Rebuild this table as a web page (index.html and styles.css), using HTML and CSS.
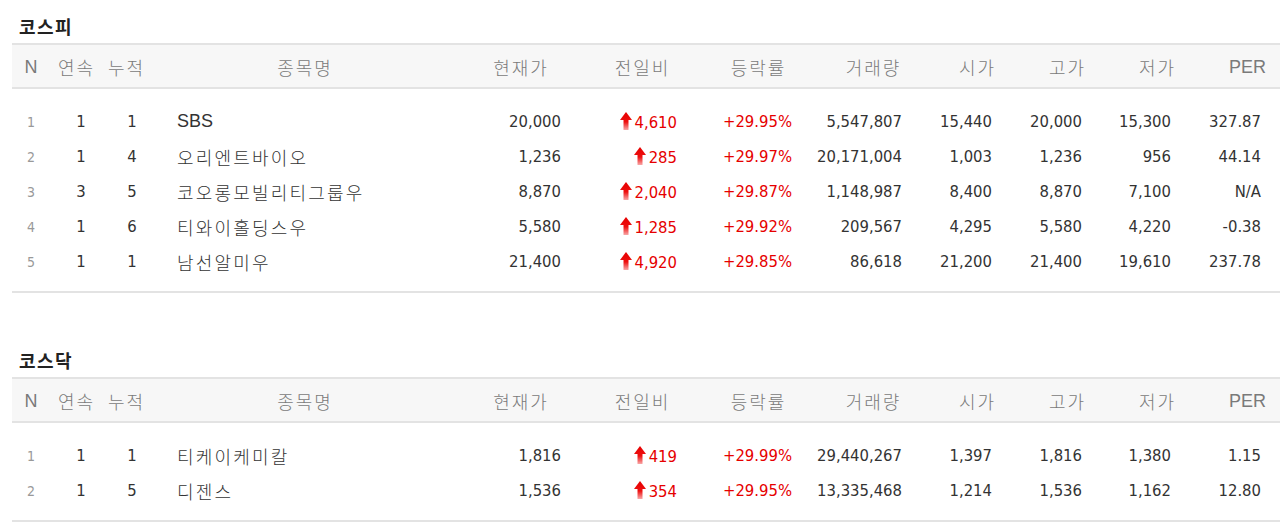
FILE: index.html
```html
<!DOCTYPE html>
<html lang="ko">
<head>
<meta charset="utf-8">
<title>코스피 · 코스닥 상한가</title>
<link rel="stylesheet" href="styles.css">
</head>
<body>
<svg class="defs" width="0" height="0" aria-hidden="true">
  <defs>
    <linearGradient id="upgrad" x1="0" y1="0" x2="0" y2="1">
      <stop offset="0" stop-color="#e60000"/>
      <stop offset="0.55" stop-color="#ee1010"/>
      <stop offset="1" stop-color="#f8a8a8"/>
    </linearGradient>
    <symbol id="up" viewBox="0 0 12 18">
      <path d="M6 0 L12 8 L8.5 8 L8.5 18 L3.5 18 L3.5 8 L0 8 Z" fill="url(#upgrad)"/>
    </symbol>
  </defs>
</svg>

<section class="market">
  <h2 class="market-title">코스피</h2>
  <div class="table">
    <div class="row head">
      <span class="lat">N</span><span>연속</span><span>누적</span><span>종목명</span><span>현재가</span><span>전일비</span><span>등락률</span><span>거래량</span><span>시가</span><span>고가</span><span>저가</span><span class="lat">PER</span>
    </div>
    <div class="body">
      <div class="row">
        <span class="n">1</span><span class="c">1</span><span class="c">1</span><span class="name lat">SBS</span><span class="num">20,000</span><span class="num up"><svg class="arrow"><use href="#up"/></svg>4,610</span><span class="num up">+29.95%</span><span class="num">5,547,807</span><span class="num">15,440</span><span class="num">20,000</span><span class="num">15,300</span><span class="num">327.87</span>
      </div>
      <div class="row">
        <span class="n">2</span><span class="c">1</span><span class="c">4</span><span class="name">오리엔트바이오</span><span class="num">1,236</span><span class="num up"><svg class="arrow"><use href="#up"/></svg>285</span><span class="num up">+29.97%</span><span class="num">20,171,004</span><span class="num">1,003</span><span class="num">1,236</span><span class="num">956</span><span class="num">44.14</span>
      </div>
      <div class="row">
        <span class="n">3</span><span class="c">3</span><span class="c">5</span><span class="name">코오롱모빌리티그룹우</span><span class="num">8,870</span><span class="num up"><svg class="arrow"><use href="#up"/></svg>2,040</span><span class="num up">+29.87%</span><span class="num">1,148,987</span><span class="num">8,400</span><span class="num">8,870</span><span class="num">7,100</span><span class="num">N/A</span>
      </div>
      <div class="row">
        <span class="n">4</span><span class="c">1</span><span class="c">6</span><span class="name">티와이홀딩스우</span><span class="num">5,580</span><span class="num up"><svg class="arrow"><use href="#up"/></svg>1,285</span><span class="num up">+29.92%</span><span class="num">209,567</span><span class="num">4,295</span><span class="num">5,580</span><span class="num">4,220</span><span class="num">-0.38</span>
      </div>
      <div class="row">
        <span class="n">5</span><span class="c">1</span><span class="c">1</span><span class="name">남선알미우</span><span class="num">21,400</span><span class="num up"><svg class="arrow"><use href="#up"/></svg>4,920</span><span class="num up">+29.85%</span><span class="num">86,618</span><span class="num">21,200</span><span class="num">21,400</span><span class="num">19,610</span><span class="num">237.78</span>
      </div>
    </div>
  </div>
</section>

<section class="market">
  <h2 class="market-title">코스닥</h2>
  <div class="table">
    <div class="row head">
      <span class="lat">N</span><span>연속</span><span>누적</span><span>종목명</span><span>현재가</span><span>전일비</span><span>등락률</span><span>거래량</span><span>시가</span><span>고가</span><span>저가</span><span class="lat">PER</span>
    </div>
    <div class="body">
      <div class="row">
        <span class="n">1</span><span class="c">1</span><span class="c">1</span><span class="name">티케이케미칼</span><span class="num">1,816</span><span class="num up"><svg class="arrow"><use href="#up"/></svg>419</span><span class="num up">+29.99%</span><span class="num">29,440,267</span><span class="num">1,397</span><span class="num">1,816</span><span class="num">1,380</span><span class="num">1.15</span>
      </div>
      <div class="row">
        <span class="n">2</span><span class="c">1</span><span class="c">5</span><span class="name">디젠스</span><span class="num">1,536</span><span class="num up"><svg class="arrow"><use href="#up"/></svg>354</span><span class="num up">+29.95%</span><span class="num">13,335,468</span><span class="num">1,214</span><span class="num">1,536</span><span class="num">1,162</span><span class="num">12.80</span>
      </div>
    </div>
  </div>
</section>
</body>
</html>
```

FILE: styles.css
```css
html, body {
  margin: 0;
  padding: 0;
  overflow: hidden;
  background: #fff;
}

body {
  font-family: "Liberation Sans", "Noto Sans CJK KR", sans-serif;
  color: #333;
}

.defs {
  position: absolute;
  width: 0;
  height: 0;
}

.market {
  padding: 13px 0 0 12px;
}

.market + .market {
  margin-top: 41px;
}

.market-title {
  margin: 0 0 4px 7px;
  font-family: "Noto Sans CJK KR", sans-serif;
  font-size: 18px;
  font-weight: 700;
  letter-spacing: 1.5px;
  line-height: 26px;
  color: #222;
}

.table {
  border-top: 2px solid #e3e3e3;
  border-bottom: 2px solid #e3e3e3;
}

.row {
  display: grid;
  grid-template-columns: 38px 53px 47px 310px 122px 121px 111px 119px 89px 91px 89px 91px;
  align-items: center;
}

.head {
  height: 42px;
  background: #f7f7f7;
  border-bottom: 2px solid #e3e3e3;
  color: #7a7a7a;
  font-size: 18px;
  font-weight: 300;
  letter-spacing: 2px;
  text-align: center;
  white-space: nowrap;
}

.head > span {
  padding-top: 2px;
}

.body {
  padding: 15px 0 12px;
}

.body .row {
  height: 35px;
  white-space: nowrap;
}

.num, .c, .n {
  font-family: "DejaVu Sans Condensed", "DejaVu Sans", sans-serif;
  font-stretch: condensed;
  font-size: 16.5px;
  color: #333;
}

.n {
  font-size: 14px;
  color: #999;
  text-align: center;
}

.c {
  text-align: center;
}

.body .row > :nth-child(2) { padding-left: 9px; }
.body .row > :nth-child(3) { padding-left: 11px; }

.name {
  padding-left: 27px;
  font-size: 18px;
  font-weight: 300;
  letter-spacing: 2.2px;
  color: #333;
}

.head .lat,
.name.lat {
  letter-spacing: 0;
  font-weight: 400;
}

.num {
  text-align: right;
}

.body .row > :nth-child(5) { padding-right: 21px; }
.body .row > :nth-child(6) { padding-right: 26px; }
.body .row > :nth-child(7) { padding-right: 22px; }
.body .row > :nth-child(8) { padding-right: 31px; }
.body .row > :nth-child(9) { padding-right: 30px; }
.body .row > :nth-child(10) { padding-right: 31px; }
.body .row > :nth-child(11) { padding-right: 31px; }
.body .row > :nth-child(12) { padding-right: 32px; }

.up {
  color: #e60000;
}

.arrow {
  width: 12px;
  height: 18px;
  margin-right: 3px;
  vertical-align: -2px;
}
```
